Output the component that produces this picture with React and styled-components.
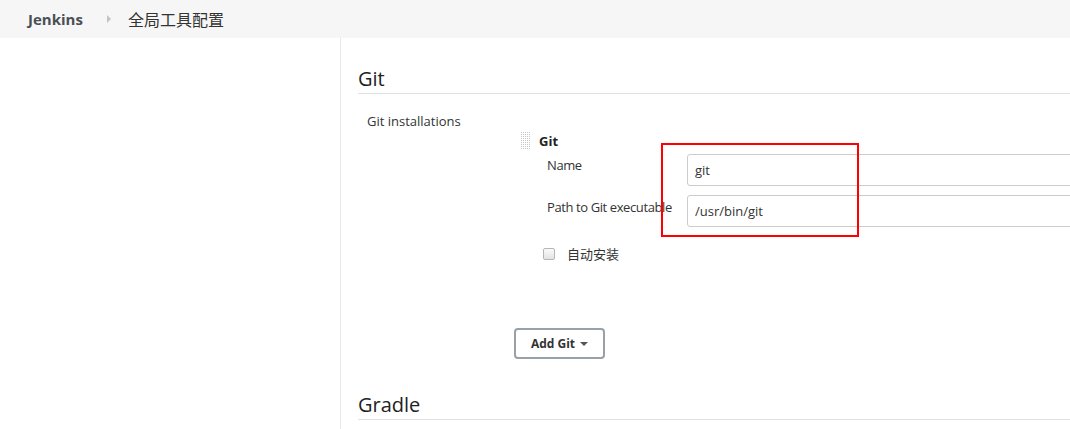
import React from "react";
import styled, { createGlobalStyle } from "styled-components";

const Global = createGlobalStyle`
  html, body {
    margin: 0;
    padding: 0;
    background: #fff;
    font-family: "Open Sans", "Noto Sans", "Noto Sans CJK SC", sans-serif;
    color: #333;
    overflow: hidden;
  }
`;

const Page = styled.div`
  width: 1070px;
  height: 429px;
  overflow: hidden;
  display: flex;
  flex-direction: column;
`;

const Header = styled.div`
  height: 38px;
  flex: none;
  background: #f6f6f6;
  display: flex;
  align-items: center;
  padding-left: 28px;
`;

const Crumb = styled.span`
  font-size: ${(p) => (p.$strong ? "15px" : "16px")};
  font-weight: ${(p) => (p.$strong ? 700 : 400)};
  color: ${(p) => (p.$strong ? "#4a4f55" : "#333")};
  font-family: "Open Sans", "Noto Sans CJK SC", sans-serif;
`;

const Chevron = styled.span`
  width: 0;
  height: 0;
  margin: 0 17px 0 24px;
  border-top: 4px solid transparent;
  border-bottom: 4px solid transparent;
  border-left: 4px solid #c4c4c4;
`;

const Body = styled.div`
  flex: 1;
  display: flex;
`;

const Sidebar = styled.div`
  width: 340px;
  flex: none;
  border-right: 1px solid #e8e8e8;
`;

const Main = styled.div`
  flex: none;
  width: 1000px;
  padding: 0 0 0 17px;
`;

const SectionTitle = styled.h2`
  margin: ${(p) => p.$top}px 0 0;
  font-size: 20px;
  font-weight: 400;
  line-height: 27px;
  color: #222;
  padding-bottom: 1px;
  border-bottom: 1px solid #e1e1e1;
`;

const Row = styled.div`
  display: flex;
  padding-top: 18px;
`;

const RowLabel = styled.div`
  flex: none;
  width: 147px;
  padding-left: 9px;
  font-size: 13px;
  line-height: 18px;
  color: #333;
`;

const RowContent = styled.div`
  flex: 1;
  min-width: 0;
`;

const Repeated = styled.div`
  position: relative;
  padding: 19px 0 0 6px;
`;

const RepeatedHead = styled.div`
  display: flex;
  align-items: center;
  gap: 9px;
  font-size: 13px;
  font-weight: 700;
  color: #222;
`;

const Handle = styled.span`
  width: 10px;
  height: 19px;
  background-color: #c6c6c6;
  background-image: linear-gradient(90deg, #fff 1px, transparent 1px),
    linear-gradient(#fff 1px, transparent 1px);
  background-size: 2px 2px;
`;

const Fields = styled.div`
  display: grid;
  grid-template-columns: 140px 1fr;
  row-gap: 9px;
  padding: 4px 0 0 27px;
`;

const FieldLabel = styled.div`
  font-size: 13px;
  letter-spacing: -0.4px;
  color: #333;
  padding-top: ${(p) => p.$pt}px;
  white-space: nowrap;
`;

const Input = styled.input`
  height: 32px;
  box-sizing: border-box;
  width: 600px;
  border: 1px solid #ccc;
  border-radius: 3px;
  padding: 0 7px;
  font-family: inherit;
  font-size: 13px;
  color: #333;
  outline: none;
`;

const CheckRow = styled.label`
  display: flex;
  align-items: center;
  gap: 12px;
  padding: 17px 0 0 23px;
  font-size: 13px;
  color: #333;
`;

const Box = styled.span`
  width: 10px;
  height: 10px;
  border: 1px solid #b5b5b5;
  border-radius: 2px;
  background: linear-gradient(#fafafa, #e3e3e3);
`;

const Highlight = styled.div`
  position: absolute;
  left: 147px;
  top: 31px;
  width: 194px;
  height: 90px;
  border: 2px solid #f00;
  pointer-events: none;
`;

const AddButton = styled.button`
  margin-top: 65px;
  width: 91px;
  height: 31px;
  box-sizing: border-box;
  border: 2px solid #97a1a9;
  border-radius: 4px;
  background: #fff;
  font-family: inherit;
  font-size: 12px;
  font-weight: 700;
  color: #333;
  display: flex;
  align-items: center;
  justify-content: center;
  gap: 5px;
`;

const Caret = styled.span`
  width: 0;
  height: 0;
  border-left: 4px solid transparent;
  border-right: 4px solid transparent;
  border-top: 4px solid #555;
`;

export default function App() {
  return (
    <Page>
      <Global />
      <Header>
        <Crumb $strong>Jenkins</Crumb>
        <Chevron />
        <Crumb>全局工具配置</Crumb>
      </Header>
      <Body>
        <Sidebar />
        <Main>
          <SectionTitle $top={27}>Git</SectionTitle>
          <Row>
            <RowLabel>Git installations</RowLabel>
            <RowContent>
              <Repeated>
                <RepeatedHead>
                  <Handle />
                  Git
                </RepeatedHead>
                <Fields>
                  <FieldLabel $pt={2}>Name</FieldLabel>
                  <Input defaultValue="git" />
                  <FieldLabel $pt={3}>Path to Git executable</FieldLabel>
                  <Input defaultValue="/usr/bin/git" />
                </Fields>
                <CheckRow>
                  <Box />
                  自动安装
                </CheckRow>
                <Highlight />
              </Repeated>
              <AddButton>
                Add Git <Caret />
              </AddButton>
            </RowContent>
          </Row>
          <SectionTitle $top={32}>Gradle</SectionTitle>
        </Main>
      </Body>
    </Page>
  );
}
